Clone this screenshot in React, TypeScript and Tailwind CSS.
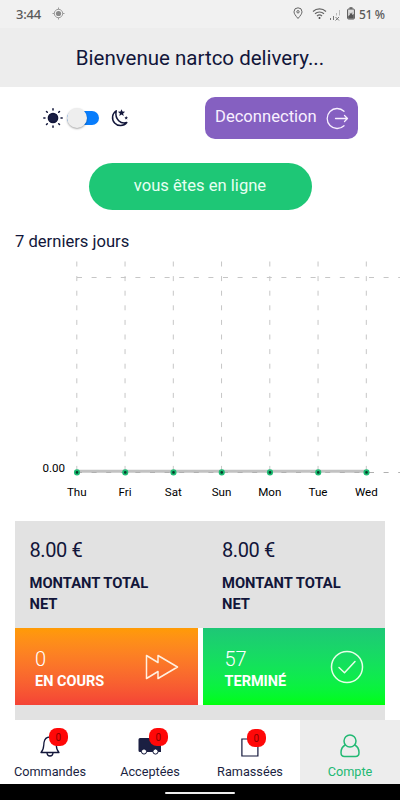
import type { ReactNode } from "react";

const DAYS = ["Thu", "Fri", "Sat", "Sun", "Mon", "Tue", "Wed"];
const CHART_LEFT = 76.8;
const DAY_STEP = 48.25;
const NAVY = "#12163a";

function StatusBar() {
  return (
    <div className="flex h-7 items-center bg-[#f1f1f1] pl-4 pr-4 text-[#5a5a5a]">
      <span className="w-[26px] font-['Noto_Sans'] text-[13px] font-medium leading-none tracking-[-0.2px]">3:44</span>
      <svg className="ml-[10px] mb-px" width="13" height="13" viewBox="0 0 13 13" fill="none" stroke="#9a9a9a">
        <circle cx="6.5" cy="6.5" r="4.2" />
        <circle cx="6.5" cy="6.5" r="2.6" fill="#8a8a8a" stroke="none" />
        <path d="M6.5 .5v2M6.5 10.5v2M.5 6.5h2M10.5 6.5h2" />
      </svg>
      <div className="ml-auto flex items-center pb-px">
        <svg width="10" height="13" viewBox="0 0 10 13" fill="none" stroke="#666">
          <path d="M5 11.5C2.5 8.6 1 6.6 1 4.8a4 4 0 0 1 8 0c0 1.8-1.5 3.8-4 6.7z" />
          <circle cx="5" cy="4.8" r="1.2" />
        </svg>
        <svg className="ml-[9px]" width="15" height="13" viewBox="0 0 15 13" fill="none" stroke="#666" strokeWidth="1.2">
          <path d="M1 4.500a9.500 9.500 0 0 1 13 0M3 6.800a6.500 6.500 0 0 1 9 0M5 9a3.700 3.700 0 0 1 5 0" />
          <circle cx="7.500" cy="11" r="1" fill="#444" stroke="none" />
        </svg>
        <svg className="ml-[2px] mt-[2px]" width="12" height="13" viewBox="0 0 12 13" fill="none" stroke="#777">
          <path d="M1.500 10v2M4.500 8v4" />
          <path d="M7.500 5v2.500M10.500 2v5.500" stroke="#bbb" />
          <path d="M6.500 9l3.500 3.500M10 9l-3.500 3.500" />
        </svg>
        <svg className="ml-[6px]" width="8" height="13" viewBox="0 0 8 13" fill="none" stroke="#555">
          <path d="M2.500 1h3" strokeWidth="1.500" />
          <rect x=".6" y="2" width="6.800" height="10" rx="1" fill="#ddd" />
          <path d="M1.200 9l1.600-1V5.500L4 7l1.200-2v3L6.800 7v4.500H1.200z" fill="#555" stroke="none" />
        </svg>
        <span className="ml-[4px] mt-[2px] w-[25px] whitespace-nowrap font-['Noto_Sans'] text-[12px] font-medium leading-none tracking-[-0.4px]">51 %</span>
      </div>
    </div>
  );
}

function ThemeSwitch() {
  return (
    <div className="flex items-center">
      <svg width="20" height="20" viewBox="0 0 20 20" stroke={NAVY} strokeWidth="1.500" strokeLinecap="round">
        <circle cx="10" cy="10" r="4.600" fill="#1b1f45" />
        <path d="M10 .8v1.200M10 18v1.200M.8 10H2M18 10h1.200M3.500 3.500l.8.8M15.700 15.700l.8.8M3.500 16.500l.8-.8M15.700 4.300l.8-.8" />
      </svg>
      <div className="ml-[4px] flex h-[14px] w-[32px] items-center rounded-full bg-[#087dfc]">
        <div className="h-5 w-5 shrink-0 rounded-full bg-[#eeeeee] shadow-[0_1px_2px_rgba(0,0,0,0.35)]" />
      </div>
      <svg className="ml-[11px]" width="19" height="20" viewBox="0 0 19 20" fill="none" stroke={NAVY} strokeWidth="1.500" strokeLinejoin="round">
        <path d="M6.200 2.800A8 8 0 1 0 16.800 14.500C11 16.500 4.500 11.500 6.200 2.800z" />
        <path d="M11.500 1.200l1 2.400 2.600.2-2 1.700.7 2.500-2.300-1.400-2.200 1.400.6-2.500-2-1.700 2.600-.2zM16.200 8l.5 1.200 1.300.2-1 .8.300 1.300-1.100-.7-1.200.7.400-1.300-1-.8 1.300-.2z" fill={NAVY} stroke="none" />
      </svg>
    </div>
  );
}

function WeekChart() {
  return (
    <svg className="block h-[250px] w-full" viewBox="0 255 400 250" fontFamily="Roboto, sans-serif" fontSize="11.6">
      <g stroke="#c6c6c6" strokeDasharray="5 9.600">
        {DAYS.map((day, i) => (
          <line key={day} x1={CHART_LEFT + i * DAY_STEP} x2={CHART_LEFT + i * DAY_STEP} y1="261.500" y2="472" />
        ))}
        <line x1="77" x2="400" y1="277.500" y2="277.500" />
      </g>
      <line x1="77" x2="366" y1="471.300" y2="471.300" stroke="#c2c2c2" strokeWidth="3" />
      <line x1="77" x2="400" y1="472.500" y2="472.500" stroke="#b0b0b0" strokeDasharray="5 9.600" />
      {DAYS.map((day, i) => (
        <g key={day}>
          <circle cx={CHART_LEFT + i * DAY_STEP + 0.2} cy="472.400" r="2.200" fill="#073b2b" stroke="#1cbc72" strokeWidth="1.700" />
          <text x={CHART_LEFT + i * DAY_STEP} y="495.800" textAnchor="middle">{day}</text>
        </g>
      ))}
      <text x="65" y="472.200" textAnchor="end">0.00</text>
    </svg>
  );
}

function Total() {
  return (
    <div className="pl-[14.5px] pt-[17px]">
      <div className="text-[20px] leading-6 tracking-[-0.4px]">8.00 €</div>
      <div className="mt-[11px] w-[140px] text-[14.75px] font-bold leading-[21px]">MONTANT TOTAL NET</div>
    </div>
  );
}

interface StatCardProps {
  value: string;
  label: string;
  className: string;
  children: ReactNode;
}

function StatCard({ value, label, className, children }: StatCardProps) {
  return (
    <div className={`flex items-center justify-between text-white ${className}`}>
      <div className="pt-[6px]">
        <div className="text-[20px] font-light leading-6">{value}</div>
        <div className="text-[14.5px] font-bold leading-[22px]">{label}</div>
      </div>
      {children}
    </div>
  );
}

interface TabProps {
  label: string;
  badge?: string;
  active?: boolean;
  badgeClass?: string;
  children: ReactNode;
}

function Tab({ label, badge, active, badgeClass, children }: TabProps) {
  return (
    <div className={`flex flex-1 flex-col items-center pt-[13px] text-[12.7px] ${active ? "bg-[#ededed] text-[#22b973]" : "bg-white text-[#1b1f42]"}`}>
      <div className="relative h-[27px] w-6">
        {children}
        {badge && (
          <span className={`absolute flex h-[18px] w-[18.5px] items-center justify-center rounded-[8px] bg-[#ff0808] text-[10px] text-[#8c0000] ${badgeClass}`}>
            {badge}
          </span>
        )}
      </div>
      <span className="mt-[4px] leading-4">{label}</span>
    </div>
  );
}

export default function App() {
  return (
    <div className="flex h-[800px] w-[400px] flex-col overflow-hidden bg-white font-['Roboto',sans-serif] text-[#12163a]">
      <StatusBar />
      <header className="flex h-[59px] items-center justify-center bg-[#ededed] pt-px text-[20.5px]">
        Bienvenue nartco delivery...
      </header>

      <div className="flex h-[62px] items-center justify-between pl-[43px] pr-[42px]">
        <ThemeSwitch />
        <button className="flex h-[42px] w-[153px] items-center justify-between rounded-[10px] bg-[#8560c1] pl-[10px] pr-[9px] text-[16.6px] text-[#f8f0ff]">
          <span className="pb-px">Deconnection</span>
          <svg width="23" height="23" viewBox="0 0 23 23" fill="none" stroke="currentColor" strokeWidth="1.300" strokeLinecap="round" strokeLinejoin="round">
            <path d="M18 4.200A10 10 0 1 0 18 18.800M9.500 11.500h12M18.500 8.500l3 3-3 3" />
          </svg>
        </button>
      </div>

      <div className="mx-auto mt-[14px] flex h-[47px] w-[223px] shrink-0 items-center justify-center rounded-full bg-[#1ec776] pb-px text-[16.6px] text-[#e6fff2]">
        vous êtes en ligne
      </div>
      <h2 className="ml-[15px] mt-[22px] h-[23px] shrink-0 text-[16.6px] leading-5">7 derniers jours</h2>
      <WeekChart />

      <section className="mx-[15px] mt-[16px] h-[199px] shrink-0 bg-[#e2e2e2]">
        <div className="grid h-[107px] grid-cols-2 gap-[15px]">
          <Total />
          <Total />
        </div>
        <div className="grid h-[77px] grid-cols-2 gap-[5px] bg-white">
          <StatCard value="0" label="EN COURS" className="bg-linear-to-b from-[#ff9b05] to-[#f44336] pl-5 pr-[19px]">
            <svg width="34" height="26" viewBox="0 0 34 26" fill="none" stroke="#fff0e0" strokeWidth="1.500" strokeLinejoin="round">
              <path d="M1.500 1.500L13 8.500v-7L32.500 13 13 24.500v-7L1.500 24.500z" />
            </svg>
          </StatCard>
          <StatCard value="57" label="TERMINÉ" className="bg-linear-to-b from-[#1ec776] to-[#00ff08] pl-[22px] pr-[21px]">
            <svg width="34" height="34" viewBox="0 0 34 34" fill="none" stroke="#e8ffe8" strokeWidth="1.500" strokeLinecap="round" strokeLinejoin="round">
              <circle cx="17" cy="17" r="15.500" />
              <path d="M9 17.500l5.500 5.200L25 11.500" />
            </svg>
          </StatCard>
        </div>
      </section>

      <nav className="flex h-[64px] shrink-0">
        <Tab label="Commandes" badge="0" badgeClass="left-[11px] top-[-5px]">
          <svg width="24" height="26" viewBox="0 0 24 26" fill="none" stroke={NAVY} strokeWidth="1.300" strokeLinejoin="round">
            <path d="M3 19.500c3-3 2.500-5.500 3-10C6.500 6 8.500 4 12 4s5.500 2 6 5.500c.5 4.500 0 7 3 10z" />
            <path d="M9 20c.3 4 5.700 4 6 0M12 4V2" />
          </svg>
        </Tab>
        <Tab label="Acceptées" badge="0" badgeClass="left-[11px] top-[-5px]">
          <svg width="24" height="26" viewBox="0 0 24 26">
            <path d="M2 5h12.500v2H20l3 5v7H2q-1.500 0-1.500-1.500v-11Q.5 5 2 5z" fill="#1b1f42" />
            <circle cx="6" cy="18.500" r="2.600" fill="white" stroke={NAVY} />
            <circle cx="17.500" cy="18.500" r="2.600" fill="white" stroke={NAVY} />
          </svg>
        </Tab>
        <Tab label="Ramassées" badge="0" badgeClass="left-[9px] top-[-4px]">
          <svg width="24" height="26" viewBox="0 0 24 26" fill="none" stroke={NAVY} strokeWidth="1.200">
            <path d="M3.900 6h16v17h-16z" />
          </svg>
        </Tab>
        <Tab label="Compte" active>
          <svg width="24" height="26" viewBox="0 0 24 26" fill="none" stroke="#22b973" strokeWidth="1.500" strokeLinejoin="round">
            <circle cx="12" cy="8" r="6" />
            <path d="M7.200 12C4.500 13.500 3 16 3 19.500 3 22.500 4 23.500 6.500 23.500h11c2.500 0 3.500-1 3.500-4 0-3.500-1.500-6-4.200-7.500" />
          </svg>
        </Tab>
      </nav>
      <footer className="flex h-4 shrink-0 justify-center bg-black pt-2">
        <div className="h-[2px] w-[70px] rounded-full bg-[#eeeeee]" />
      </footer>
    </div>
  );
}
